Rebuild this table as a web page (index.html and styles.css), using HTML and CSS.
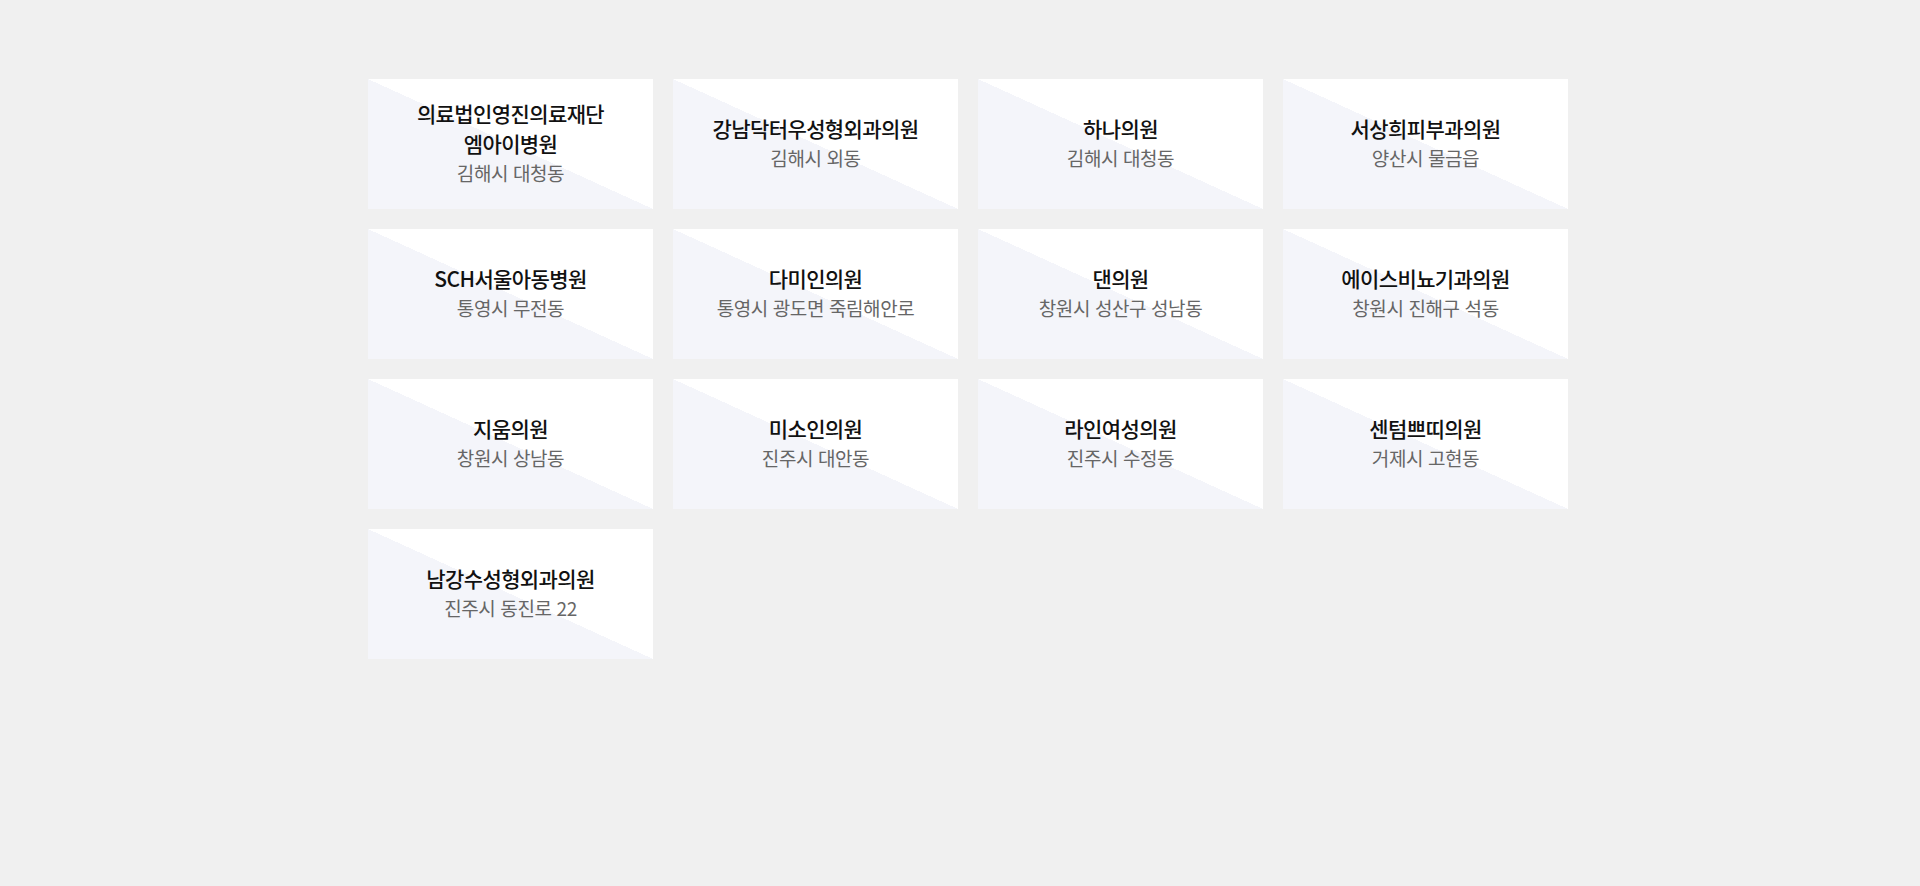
FILE: index.html
```html
<!DOCTYPE html>
<html lang="ko">
<head>
<meta charset="utf-8">
<title>병원 목록</title>
<link rel="stylesheet" href="styles.css">
</head>
<body>
<ul class="clinic-list">
  <li class="clinic-card"><p class="clinic-name">의료법인영진의료재단<br>엠아이병원</p><p class="clinic-addr">김해시 대청동</p></li>
  <li class="clinic-card"><p class="clinic-name">강남닥터우성형외과의원</p><p class="clinic-addr">김해시 외동</p></li>
  <li class="clinic-card"><p class="clinic-name">하나의원</p><p class="clinic-addr">김해시 대청동</p></li>
  <li class="clinic-card"><p class="clinic-name">서상희피부과의원</p><p class="clinic-addr">양산시 물금읍</p></li>
  <li class="clinic-card"><p class="clinic-name">SCH서울아동병원</p><p class="clinic-addr">통영시 무전동</p></li>
  <li class="clinic-card"><p class="clinic-name">다미인의원</p><p class="clinic-addr">통영시 광도면 죽림해안로</p></li>
  <li class="clinic-card"><p class="clinic-name">댄의원</p><p class="clinic-addr">창원시 성산구 성남동</p></li>
  <li class="clinic-card"><p class="clinic-name">에이스비뇨기과의원</p><p class="clinic-addr">창원시 진해구 석동</p></li>
  <li class="clinic-card"><p class="clinic-name">지움의원</p><p class="clinic-addr">창원시 상남동</p></li>
  <li class="clinic-card"><p class="clinic-name">미소인의원</p><p class="clinic-addr">진주시 대안동</p></li>
  <li class="clinic-card"><p class="clinic-name">라인여성의원</p><p class="clinic-addr">진주시 수정동</p></li>
  <li class="clinic-card"><p class="clinic-name">센텀쁘띠의원</p><p class="clinic-addr">거제시 고현동</p></li>
  <li class="clinic-card"><p class="clinic-name">남강수성형외과의원</p><p class="clinic-addr">진주시 동진로 22</p></li>
</ul>
</body>
</html>
```

FILE: styles.css
```css
html, body {
  margin: 0;
  padding: 0;
  background: #f0f0f0;
}
body {
  padding-left: 16px;
  font-family: "Noto Sans CJK KR", "Noto Sans", sans-serif;
}
.clinic-list {
  list-style: none;
  margin: 79px auto 0;
  padding: 0;
  width: 1200px;
  display: grid;
  grid-template-columns: repeat(4, 285px);
  column-gap: 20px;
  row-gap: 20px;
}
.clinic-card {
  height: 130px;
  box-sizing: border-box;
  display: flex;
  flex-direction: column;
  justify-content: center;
  align-items: center;
  text-align: center;
  background: linear-gradient(to top right, #f4f5fa 50%, #ffffff 50%);
  padding-bottom: 6px;
}
.clinic-name {
  margin: 0;
  font-size: 21px;
  font-weight: 500;
  line-height: 30px;
  letter-spacing: -0.6px;
  color: #111111;
}
.clinic-addr {
  margin: 3px 0 0;
  font-size: 19px;
  font-weight: 400;
  line-height: 24px;
  letter-spacing: -0.4px;
  color: #666666;
}
```
